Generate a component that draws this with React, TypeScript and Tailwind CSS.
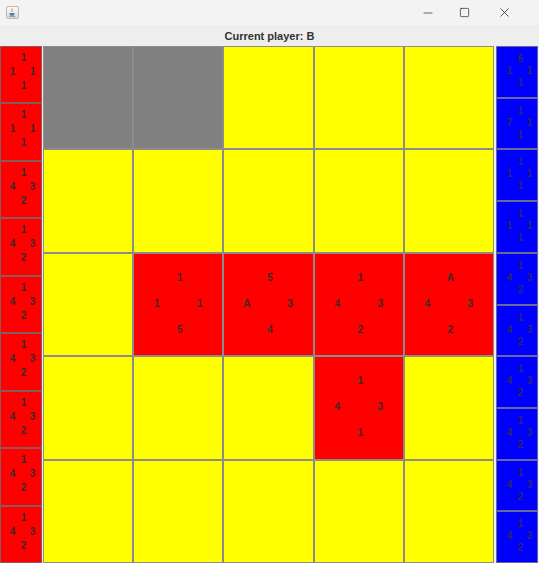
import { Minus, Square, X } from "lucide-react";

type Tile = { t: string; l: string; r: string; b: string };
type Cell = { kind: "gray" | "yellow" | "red"; tile?: Tile };

const tile = (t: string, l: string, r: string, b: string): Tile => ({ t, l, r, b });

const leftTiles: Tile[] = [
  tile("1", "1", "1", "1"),
  tile("1", "1", "1", "1"),
  tile("1", "4", "3", "2"),
  tile("1", "4", "3", "2"),
  tile("1", "4", "3", "2"),
  tile("1", "4", "3", "2"),
  tile("1", "4", "3", "2"),
  tile("1", "4", "3", "2"),
  tile("1", "4", "3", "2"),
];

const rightTiles: Tile[] = [
  tile("6", "1", "1", "1"),
  tile("1", "7", "1", "1"),
  tile("1", "1", "1", "1"),
  tile("1", "1", "1", "1"),
  tile("1", "4", "3", "2"),
  tile("1", "4", "3", "2"),
  tile("1", "4", "3", "2"),
  tile("1", "4", "3", "2"),
  tile("1", "4", "3", "2"),
  tile("1", "4", "3", "2"),
];

const Y: Cell = { kind: "yellow" };
const G: Cell = { kind: "gray" };

const board: Cell[][] = [
  [G, G, Y, Y, Y],
  [Y, Y, Y, Y, Y],
  [
    Y,
    { kind: "red", tile: tile("1", "1", "1", "5") },
    { kind: "red", tile: tile("5", "A", "3", "4") },
    { kind: "red", tile: tile("1", "4", "3", "2") },
    { kind: "red", tile: tile("A", "4", "3", "2") },
  ],
  [Y, Y, Y, { kind: "red", tile: tile("1", "4", "3", "1") }, Y],
  [Y, Y, Y, Y, Y],
];

function JavaIcon() {
  return (
    <div className="w-[13px] h-[13px] rounded-[2px] border border-[#b8b8b8] bg-gradient-to-b from-[#fafafa] to-[#d8dde4] flex items-center justify-center">
      <svg width="9" height="9" viewBox="0 0 9 9">
        <path d="M4 0.5 C3 2 5 2.5 4 4" stroke="#e76f00" strokeWidth="0.9" fill="none" />
        <path d="M1.5 5 h5 v1.2 a2 2 0 0 1 -2 1.6 h-1 a2 2 0 0 1 -2 -1.6z" fill="#5382a1" />
        <path d="M1 8.4 h6.5" stroke="#5382a1" strokeWidth="0.7" />
      </svg>
    </div>
  );
}

function SideTile({ t, pad, gapY }: { t: Tile; pad: string; gapY: string }) {
  return (
    <div className={`flex flex-col items-center ${pad} ${gapY}`}>
      <span className="leading-[12px] pl-[2px]">{t.t}</span>
      <div className="flex gap-[10px]">
        <span className="leading-[12px] w-[10px] text-center">{t.l}</span>
        <span className="leading-[12px] w-[10px] text-center">{t.r}</span>
      </div>
      <span className="leading-[12px] pl-[2px]">{t.b}</span>
    </div>
  );
}

export default function App() {
  return (
    <div
      className="w-[539px] h-[563px] flex flex-col bg-[#eeeeee] overflow-hidden text-[10px] font-bold"
      style={{ fontFamily: '"Liberation Sans", Arial, sans-serif' }}
    >
      {/* Title bar */}
      <div className="h-[25px] shrink-0 bg-[#f3f3f3] flex items-center pl-[6px] pr-[10px]">
        <JavaIcon />
        <div className="flex-1" />
        <div className="flex items-center h-full text-[#222]">
          <div className="w-[37px] flex justify-center">
            <Minus size={14} strokeWidth={1.2} />
          </div>
          <div className="w-[37px] flex justify-center">
            <Square size={11} strokeWidth={1.5} />
          </div>
          <div className="w-[46px] flex justify-center pr-[4px]">
            <X size={15} strokeWidth={1.2} />
          </div>
        </div>
      </div>

      {/* Status label */}
      <div className="h-[21px] shrink-0 flex items-center justify-center text-[11px] text-[#333] pt-[1px]">
        Current player: B
      </div>

      {/* Main area */}
      <div className="flex h-[517px]">
        {/* Left hand */}
        <div className="w-[42px] flex flex-col">
          {leftTiles.map((t, i) => (
            <div key={i} className="flex-1 bg-[#ff0000] border border-[#8a5a5a] text-[#3a2a2a]">
              <SideTile t={t} pad="pt-[5px] pl-[3px]" gapY="gap-[2px]" />
            </div>
          ))}
        </div>

        {/* Board */}
        <div className="w-[451px] ml-[1px] grid grid-cols-5 grid-rows-5">
          {board.map((row, r) =>
            row.map((c, ci) => (
              <div
                key={`${r}-${ci}`}
                className={`border border-[#8c8c8c] ${
                  c.kind === "gray" ? "bg-[#808080]" : c.kind === "yellow" ? "bg-[#ffff00]" : "bg-[#ff0000]"
                } text-[#3a2a2a]`}
              >
                {c.tile && (
                  <div className="flex flex-col items-center pt-[18px] gap-[14px]">
                    <span className="leading-[12px] pl-[3px]">{c.tile.t}</span>
                    <div className="flex gap-[31px]">
                      <span className="leading-[12px] w-[12px] text-center">{c.tile.l}</span>
                      <span className="leading-[12px] w-[12px] text-center">{c.tile.r}</span>
                    </div>
                    <span className="leading-[12px] pl-[3px]">{c.tile.b}</span>
                  </div>
                )}
              </div>
            ))
          )}
        </div>

        {/* Right hand */}
        <div className="w-[42px] ml-[2px] flex flex-col">
          {rightTiles.map((t, i) => (
            <div key={i} className="flex-1 bg-[#0000ff] border border-[#6a6a9a] text-[#2a2a5e]">
              <SideTile t={t} pad="pt-[6px] pl-[5px]" gapY="gap-0" />
            </div>
          ))}
        </div>
      </div>
    </div>
  );
}
